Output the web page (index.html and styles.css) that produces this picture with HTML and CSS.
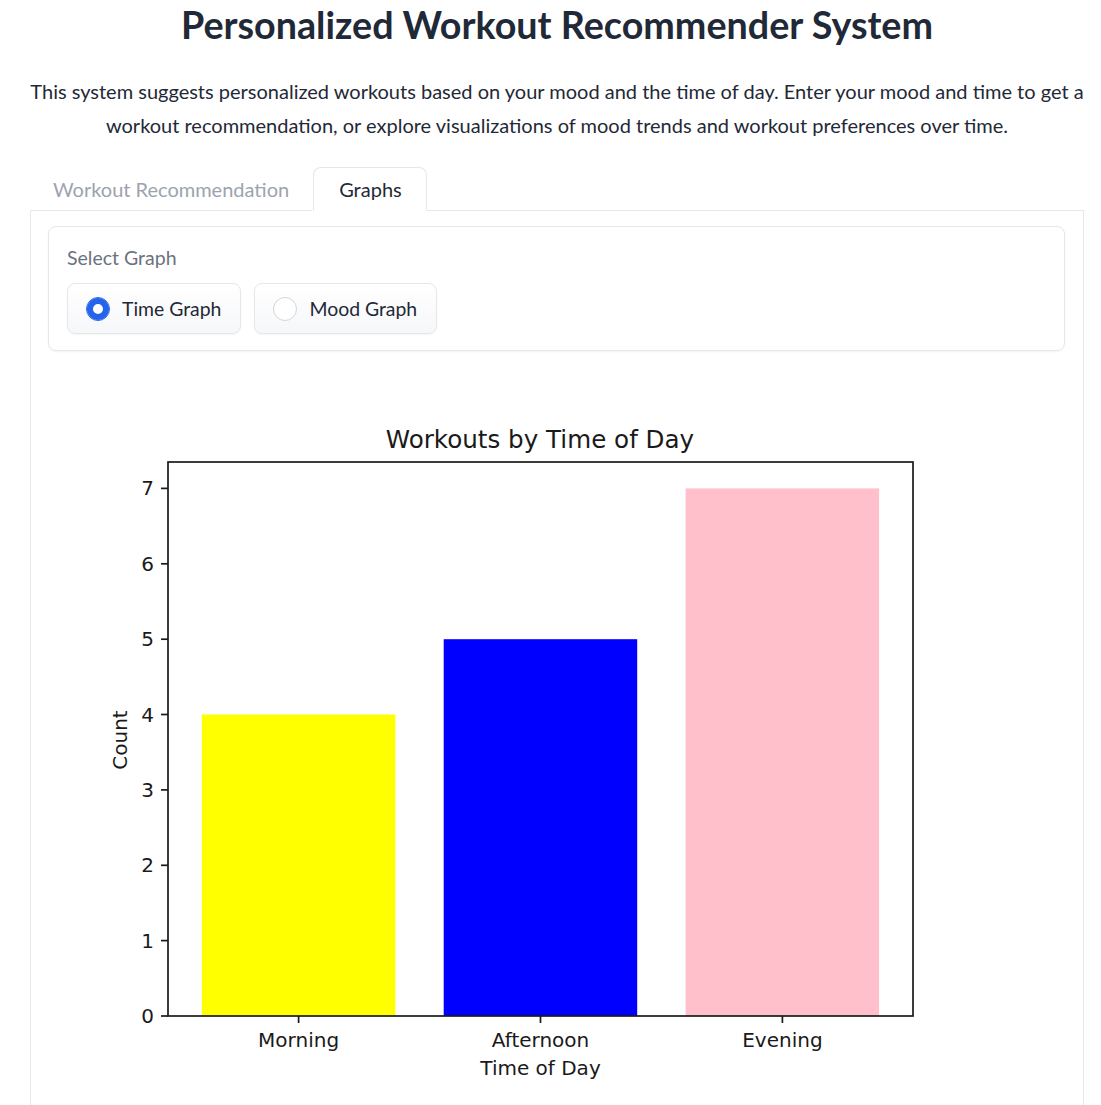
FILE: index.html
```html
<!DOCTYPE html>
<html>
<head>
<meta charset="utf-8">
<link rel="stylesheet" href="styles.css">
</head>
<body>
<div class="app">
  <h1 class="title">Personalized Workout Recommender System</h1>
  <p class="intro">This system suggests personalized workouts based on your mood and the time of day. Enter your mood and time to get a workout recommendation, or explore visualizations of mood trends and workout preferences over time.</p>
  <div class="tabs">
    <div class="tab-nav">
      <button class="tab">Workout Recommendation</button>
      <button class="tab tab-active">Graphs</button>
      <div class="tab-fill"></div>
    </div>
    <div class="tab-panel">
      <div class="block">
        <div class="block-label">Select Graph</div>
        <div class="radios">
          <label class="radio-item"><span class="radio radio-on"></span><span>Time Graph</span></label>
          <label class="radio-item"><span class="radio"></span><span>Mood Graph</span></label>
        </div>
      </div>
      <div class="plot">
        <svg class="chart" width="961" height="721" viewBox="0 0 961 721" xmlns="http://www.w3.org/2000/svg">
          <rect x="0" y="0" width="961" height="721" fill="#fff"/>
          <text x="492" y="64" class="ctitle" text-anchor="middle" dominant-baseline="central">Workouts by Time of Day</text>
          <rect x="153.8" y="339.5" width="193.5" height="301.5" fill="#ffff00"/>
          <rect x="395.7" y="264.2" width="193.5" height="376.8" fill="#0000ff"/>
          <rect x="637.6" y="113.4" width="193.5" height="527.6" fill="#ffc0cb"/>
          <rect x="120" y="87" width="745" height="554" fill="none" stroke="#1a1a1a" stroke-width="1.7"/>
          <g stroke="#1a1a1a" stroke-width="1.7">
            <line x1="113" y1="641" x2="120" y2="641"/>
            <line x1="113" y1="565.6" x2="120" y2="565.6"/>
            <line x1="113" y1="490.3" x2="120" y2="490.3"/>
            <line x1="113" y1="414.9" x2="120" y2="414.9"/>
            <line x1="113" y1="339.5" x2="120" y2="339.5"/>
            <line x1="113" y1="264.2" x2="120" y2="264.2"/>
            <line x1="113" y1="188.8" x2="120" y2="188.8"/>
            <line x1="113" y1="113.4" x2="120" y2="113.4"/>
            <line x1="250.6" y1="641" x2="250.6" y2="648"/>
            <line x1="492.5" y1="641" x2="492.5" y2="648"/>
            <line x1="734.4" y1="641" x2="734.4" y2="648"/>
          </g>
          <g class="tick" text-anchor="end" dominant-baseline="central">
            <text x="106" y="641">0</text>
            <text x="106" y="565.6">1</text>
            <text x="106" y="490.3">2</text>
            <text x="106" y="414.9">3</text>
            <text x="106" y="339.5">4</text>
            <text x="106" y="264.2">5</text>
            <text x="106" y="188.8">6</text>
            <text x="106" y="113.4">7</text>
          </g>
          <g class="tick" text-anchor="middle" dominant-baseline="central">
            <text x="250.6" y="665">Morning</text>
            <text x="492.5" y="665">Afternoon</text>
            <text x="734.4" y="665">Evening</text>
            <text x="492.5" y="693">Time of Day</text>
            <text x="72" y="365" transform="rotate(-90 72 365)">Count</text>
          </g>
        </svg>
      </div>
    </div>
  </div>
</div>
</body>
</html>
```
FILE: styles.css
```css
* { box-sizing: border-box; }
body {
  margin: 0;
  background: #fff;
  font-family: "Lato", "Noto Sans", sans-serif;
  color: #1f2937;
}
.app {
  padding: 0 17px 0 30px;
}
.title {
  margin: 0;
  padding-top: 2px;
  text-align: center;
  font-size: 37.7px;
  font-weight: 700;
  line-height: 46px;
  color: #1f2937;
}
.intro {
  margin: 26px 0 0 0;
  text-align: center;
  font-size: 20px;
  line-height: 34px;
  color: #1f2937;
}
.tabs {
  margin-top: 25px;
}
.tab-nav {
  display: flex;
  align-items: flex-end;
  height: 44px;
}
.tab {
  font-family: inherit;
  font-size: 20px;
  background: none;
  border: 1px solid transparent;
  border-bottom: 1px solid #e5e7eb;
  height: 44px;
  padding: 0 23px 0 22px;
  color: #9ca3af;
  cursor: pointer;
}
.tab-active {
  color: #1f2937;
  border: 1px solid #e5e7eb;
  border-bottom-color: #fff;
  border-radius: 8px 8px 0 0;
  padding: 0 24px 0 25px;
}
.tab-fill {
  flex: 1;
  border-bottom: 1px solid #e5e7eb;
  height: 44px;
}
.tab-panel {
  border: 1px solid #e5e7eb;
  border-top: none;
  border-radius: 0 0 8px 8px;
  padding: 15px 18px 0 17px;
  height: 900px;
}
.block {
  border: 1px solid #e5e7eb;
  border-radius: 8px;
  box-shadow: 0 1px 2px rgba(0,0,0,0.05);
  padding: 17px 18px 16px 18px;
}
.block-label {
  font-size: 19.5px;
  color: #6b7280;
  line-height: 28px;
}
.radios {
  display: flex;
  gap: 13px;
  margin-top: 11px;
}
.radio-item {
  display: flex;
  align-items: center;
  gap: 12px;
  height: 51px;
  padding: 0 19px 0 18px;
  border: 1px solid #e5e7eb;
  border-radius: 8px;
  background: linear-gradient(#ffffff, #f6f7f9);
  box-shadow: 0 1px 2px rgba(0,0,0,0.04);
  font-size: 19.4px;
  color: #1f2937;
}
.radio {
  width: 24px;
  height: 24px;
  border-radius: 50%;
  border: 1px solid #d1d5db;
  background: #fff;
  flex: none;
}
.radio-on {
  border-color: #2563eb;
  box-shadow: inset 0 0 0 6px #2563eb, inset 0 0 0 12px #fff;
  background: #fff;
}
.plot {
  margin-top: 24px;
}
.chart {
  display: block;
}
.ctitle {
  font-family: "DejaVu Sans", sans-serif;
  font-size: 24.6px;
  fill: #1a1a1a;
}
.tick text {
  font-family: "DejaVu Sans", sans-serif;
  font-size: 20px;
  fill: #1a1a1a;
}
```
